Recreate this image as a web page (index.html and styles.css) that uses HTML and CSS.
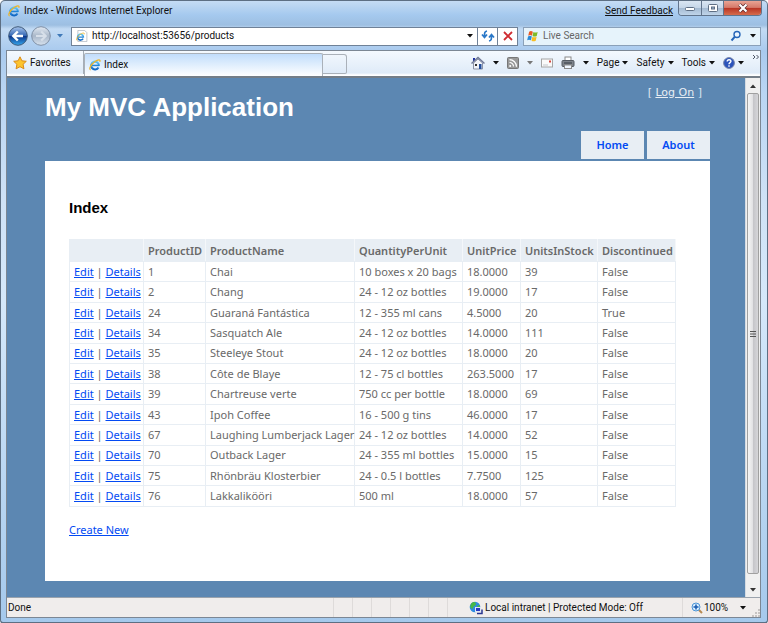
FILE: index.html
```html
<!DOCTYPE html>
<html lang="en">
<head>
<meta charset="utf-8">
<title>Index - Windows Internet Explorer</title>
<link rel="stylesheet" href="styles.css">
</head>
<body>
<svg class="defs" aria-hidden="true">
  <defs>
    <linearGradient id="ieBlue" x1="0" y1="0" x2="0" y2="1"><stop offset="0" stop-color="#5cc4f7"/><stop offset="1" stop-color="#1268c4"/></linearGradient>
    <linearGradient id="backBlue" x1="0" y1="0" x2="0" y2="1"><stop offset="0" stop-color="#a9c5ec"/><stop offset=".48" stop-color="#3467b4"/><stop offset=".5" stop-color="#0b3288"/><stop offset="1" stop-color="#36a8ee"/></linearGradient>
    <linearGradient id="fwdGrey" x1="0" y1="0" x2="0" y2="1"><stop offset="0" stop-color="#e3eaf3"/><stop offset=".5" stop-color="#a9b7c9"/><stop offset="1" stop-color="#d7e2ee"/></linearGradient>
    <symbol id="ie" viewBox="0 0 16 16">
      <path d="M13.2 9.2A5.2 5.2 0 1 0 12.6 11.2" fill="none" stroke="url(#ieBlue)" stroke-width="2.8"/>
      <path d="M4 8.6h9.6" stroke="#2183d6" stroke-width="2"/>
      <path d="M2.2 14.6C-.8 13.6 2.6 7.4 7.6 3.8 12.2.5 15.8.2 14.4 3.8" fill="none" stroke="#efb526" stroke-width="1.6"/>
    </symbol>
    <symbol id="down" viewBox="0 0 6 4"><path d="M0 0h6L3 3.5z" fill="currentColor"/></symbol>
  </defs>
</svg>
<div class="window">
  <header class="titlebar">
    <svg class="icon12"><use href="#ie"/></svg>
    <span class="title">Index - Windows Internet Explorer</span>
    <a class="feedback" href="#">Send Feedback</a>
    <div class="controls">
      <button class="ctl" aria-label="Minimize"><svg viewBox="0 0 12 10"><rect x="1.500" y="4.500" width="9" height="3" rx="1" fill="#fff" stroke="#5e6f85"/></svg></button>
      <button class="ctl" aria-label="Maximize"><svg viewBox="0 0 12 10"><rect x="1.500" y="1.500" width="9" height="7" rx="1" fill="#fff" stroke="#5e6f85"/><rect x="4.500" y="4" width="3" height="2" fill="#9fb6d0" stroke="#5e6f85"/></svg></button>
      <button class="ctl close" aria-label="Close"><svg viewBox="0 0 12 10"><path d="M2.500 1.500l7 7M9.500 1.500l-7 7" stroke="#5a2a2c" stroke-width="3.600"/><path d="M2.500 1.500l7 7M9.500 1.500l-7 7" stroke="#fff" stroke-width="2.200"/></svg></button>
    </div>
  </header>

  <div class="navrow">
    <div class="history">
      <button class="plain" aria-label="Back"><svg class="round" viewBox="0 0 20 20"><circle cx="10" cy="10" r="9.300" fill="url(#backBlue)" stroke="#3d5878"/><path d="M15 10H6M9.800 5.500L5.300 10l4.500 4.500" fill="none" stroke="#fff" stroke-width="2.400"/></svg></button>
      <button class="plain" aria-label="Forward"><svg class="round" viewBox="0 0 20 20"><circle cx="10" cy="10" r="9.300" fill="url(#fwdGrey)" stroke="#7f8fa5"/><path d="M5 10h9M10.200 5.500l4.500 4.500-4.500 4.500" fill="none" stroke="#d7dfe9" stroke-width="2.200"/></svg></button>
      <button class="plain recent" aria-label="Recent pages"><svg class="arrow"><use href="#down"/></svg></button>
    </div>
    <form class="address">
      <svg class="icon12" viewBox="0 0 16 16"><path d="M2.500.5h9l3 3v12h-12z" fill="#fff" stroke="#aab2bc"/><use href="#ie" x="0" y="3" width="12" height="12"/></svg>
      <input type="text" aria-label="Address" value="http://localhost:53656/products" autofocus>
      <button class="plain" type="button" aria-label="Show addresses"><svg class="arrow"><use href="#down"/></svg></button>
      <button class="cell" type="button" aria-label="Refresh"><svg viewBox="0 0 14 12"><path d="M6 1C3.500 1.500 3.500 3 3.500 6M1 4.500L3.500 7.500 6 4.500M8 11c2.500-.5 2.500-2 2.500-5M8 7.500L10.500 4.500 13 7.500" fill="none" stroke="#2a78c8" stroke-width="1.700"/></svg></button>
      <button class="cell" type="button" aria-label="Stop"><svg viewBox="0 0 14 12"><path d="M3 2l8 8M11 2l-8 8" stroke="#cf2b31" stroke-width="1.800"/></svg></button>
    </form>
    <form class="search">
      <svg class="icon12" viewBox="0 0 14 14"><path d="M2.500 2q2-1.500 4.300 0L5.800 6.600q-2-1.300-4.400 0z" fill="#ea5a24"/><path d="M7.500 2.300q2.200 1.400 4.900 0l-1 4.600q-2.700 1.400-4.900 0z" fill="#7fba28"/><path d="M1.200 7.500q2.300-1.300 4.400 0l-1 4.500q-2.300-1.300-4.400 0z" fill="#2b8ad8"/><path d="M6.300 7.900q2.200 1.400 4.900 0l-1 4.500q-2.700 1.400-4.900 0z" fill="#f8bd23"/></svg>
      <input type="text" aria-label="Search" placeholder="Live Search">
      <button class="plain" aria-label="Search"><svg class="icon12" viewBox="0 0 12 12"><circle cx="7" cy="4.500" r="3" fill="#eaf5ff" stroke="#2565b8" stroke-width="1.400"/><path d="M4.700 6.800L1.500 10.500" stroke="#2565b8" stroke-width="2"/></svg></button>
      <button class="plain" type="button" aria-label="Search options"><svg class="arrow"><use href="#down"/></svg></button>
    </form>
  </div>

  <div class="frame">
    <div class="tabrow">
      <button class="favorites"><svg class="icon14" viewBox="0 0 14 14"><path d="M7 .8l1.900 4 4.400.5-3.200 3 .8 4.500L7 10.700l-3.900 2.100.8-4.500-3.200-3 4.400-.5z" fill="#fcc42e" stroke="#dc8a16"/></svg>Favorites</button>
      <a class="tab" href="#"><svg class="icon12"><use href="#ie"/></svg>Index</a>
      <button class="newtab" aria-label="New tab"></button>
      <div class="commands">
        <button class="plain" aria-label="Home"><svg class="icon14" viewBox="0 0 14 14"><path d="M2 2h2v3H2z" fill="#1e2fa0"/><path d="M2.500 7v6h9V7L7 3z" fill="#f1f3f8" stroke="#8c94a8"/><path d="M.5 7.500L7 1.500l6.500 6" fill="none" stroke="#6f7896" stroke-width="1.500"/><rect x="4" y="8" width="2" height="2" fill="#333"/><rect x="8" y="8" width="2.500" height="5" fill="#244f9b"/></svg></button>
        <button class="plain" aria-label="Home options"><svg class="arrow"><use href="#down"/></svg></button>
        <button class="plain" aria-label="Feeds"><svg class="icon12" viewBox="0 0 12 12"><rect x=".5" y=".5" width="11" height="11" rx="1" fill="#999" stroke="#777"/><circle cx="3.200" cy="9" r="1" fill="#fff"/><path d="M2.500 5.500a4 4 0 0 1 4 4M2.500 2.700a7 7 0 0 1 7 7" fill="none" stroke="#fff" stroke-width="1.200"/></svg></button>
        <button class="plain dim" aria-label="Feed options"><svg class="arrow"><use href="#down"/></svg></button>
        <button class="plain" aria-label="Mail"><svg class="icon12" viewBox="0 0 12 12"><rect x=".5" y="2" width="11" height="8" fill="#fafafa" stroke="#a5a5a5"/><path d="M2 8h5" stroke="#c4c8ce"/><rect x="8" y="3.500" width="2" height="2" fill="#d8453b"/></svg></button>
        <button class="plain" aria-label="Print"><svg class="icon14" viewBox="0 0 14 14"><rect x="4" y="1" width="6" height="4" fill="#fff" stroke="#8a8a8a"/><rect x="1" y="4.500" width="12" height="6" rx="1" fill="#7d838b" stroke="#555b63"/><path d="M3 7h8" stroke="#343a42"/><rect x="3.500" y="9" width="7" height="3.500" fill="#eef6ff" stroke="#8a8a8a"/></svg></button>
        <button class="plain" aria-label="Print options"><svg class="arrow"><use href="#down"/></svg></button>
        <button class="menu">Page<svg class="arrow"><use href="#down"/></svg></button>
        <button class="menu">Safety<svg class="arrow"><use href="#down"/></svg></button>
        <button class="menu">Tools<svg class="arrow"><use href="#down"/></svg></button>
        <button class="menu help" aria-label="Help"><svg class="icon12" viewBox="0 0 12 12"><circle cx="6" cy="6" r="5.400" fill="#2b53bb" stroke="#7583a8"/><path d="M4.200 4.600C4.200 2 8 2.200 7.900 4.400 7.800 5.600 6 5.700 6 7.300M6 8.300v1.400" fill="none" stroke="#fff" stroke-width="1.400"/></svg><svg class="arrow"><use href="#down"/></svg></button>
        <button class="plain more" aria-label="More"><svg viewBox="0 0 8 6"><path d="M1 1l2 2-2 2M4.500 1l2 2-2 2" fill="none" stroke="#4e5564"/></svg></button>
      </div>
    </div>

    <div class="viewport">
      <div class="page">
        <div class="masthead">
          <h1>My MVC Application</h1>
          <p class="login">[ <a href="#">Log On</a> ]</p>
        </div>
        <nav class="tabs"><a href="#">Home</a><a href="#">About</a></nav>
        <main>
          <h2>Index</h2>
          <table>
            <colgroup><col class="c-link"><col class="c-id"><col class="c-name"><col class="c-qty"><col class="c-price"><col class="c-stock"><col class="c-disc"></colgroup>
            <thead><tr><th></th><th>ProductID</th><th>ProductName</th><th>QuantityPerUnit</th><th>UnitPrice</th><th>UnitsInStock</th><th>Discontinued</th></tr></thead>
            <tbody>
              <tr><td><a href="#">Edit</a> | <a href="#">Details</a></td><td>1</td><td>Chai</td><td>10 boxes x 20 bags</td><td>18.0000</td><td>39</td><td>False</td></tr>
              <tr><td><a href="#">Edit</a> | <a href="#">Details</a></td><td>2</td><td>Chang</td><td>24 - 12 oz bottles</td><td>19.0000</td><td>17</td><td>False</td></tr>
              <tr><td><a href="#">Edit</a> | <a href="#">Details</a></td><td>24</td><td>Guaraná Fantástica</td><td>12 - 355 ml cans</td><td>4.5000</td><td>20</td><td>True</td></tr>
              <tr><td><a href="#">Edit</a> | <a href="#">Details</a></td><td>34</td><td>Sasquatch Ale</td><td>24 - 12 oz bottles</td><td>14.0000</td><td>111</td><td>False</td></tr>
              <tr><td><a href="#">Edit</a> | <a href="#">Details</a></td><td>35</td><td>Steeleye Stout</td><td>24 - 12 oz bottles</td><td>18.0000</td><td>20</td><td>False</td></tr>
              <tr><td><a href="#">Edit</a> | <a href="#">Details</a></td><td>38</td><td>Côte de Blaye</td><td>12 - 75 cl bottles</td><td>263.5000</td><td>17</td><td>False</td></tr>
              <tr><td><a href="#">Edit</a> | <a href="#">Details</a></td><td>39</td><td>Chartreuse verte</td><td>750 cc per bottle</td><td>18.0000</td><td>69</td><td>False</td></tr>
              <tr><td><a href="#">Edit</a> | <a href="#">Details</a></td><td>43</td><td>Ipoh Coffee</td><td>16 - 500 g tins</td><td>46.0000</td><td>17</td><td>False</td></tr>
              <tr><td><a href="#">Edit</a> | <a href="#">Details</a></td><td>67</td><td>Laughing Lumberjack Lager</td><td>24 - 12 oz bottles</td><td>14.0000</td><td>52</td><td>False</td></tr>
              <tr><td><a href="#">Edit</a> | <a href="#">Details</a></td><td>70</td><td>Outback Lager</td><td>24 - 355 ml bottles</td><td>15.0000</td><td>15</td><td>False</td></tr>
              <tr><td><a href="#">Edit</a> | <a href="#">Details</a></td><td>75</td><td>Rhönbräu Klosterbier</td><td>24 - 0.5 l bottles</td><td>7.7500</td><td>125</td><td>False</td></tr>
              <tr><td><a href="#">Edit</a> | <a href="#">Details</a></td><td>76</td><td>Lakkalikööri</td><td>500 ml</td><td>18.0000</td><td>57</td><td>False</td></tr>
            </tbody>
          </table>
          <p class="create"><a href="#">Create New</a></p>
        </main>
      </div>
      <div class="scroll">
        <button aria-label="Scroll up"><svg viewBox="0 0 6 4"><path d="M0 4h6L3 .5z" fill="#333"/></svg></button>
        <div class="thumb"><svg viewBox="0 0 6 8"><path d="M0 1.500h6M0 4h6M0 6.500h6" stroke="#555"/></svg></div>
        <button aria-label="Scroll down"><svg viewBox="0 0 6 4"><path d="M0 0h6L3 3.500z" fill="#333"/></svg></button>
      </div>
    </div>

    <footer class="status">
      <span class="done">Done</span>
      <span class="slots"><i></i><i></i><i></i><i></i><i></i><i></i><i></i></span>
      <span class="zone"><svg class="icon14" viewBox="0 0 14 14"><circle cx="6" cy="6" r="5.300" fill="#2f8be0"/><path d="M2 3c2-3 5-2 5 0S4 5 4 7 2 7 1 6zM8 5l3-1v4L9 9z" fill="#48b848"/><rect x="6.500" y="6.500" width="5" height="4" fill="#2838c0" stroke="#dfe6f5"/><path d="M8 12.500h5v-4" fill="none" stroke="#27358f" stroke-width="1.500"/></svg>Local intranet | Protected Mode: Off</span>
      <button class="zoom"><svg class="icon12" viewBox="0 0 12 12"><path d="M7.500 7.500L11 11" stroke="#b68a52" stroke-width="2"/><circle cx="5" cy="5" r="4" fill="#d9eefe" stroke="#4b94d6"/><path d="M5 2.500v5M2.500 5h5" stroke="#1659b0" stroke-width="1.500"/></svg>100%<svg class="arrow"><use href="#down"/></svg></button>
      <svg class="grip" viewBox="0 0 8 8"><path d="M6 0h2v2H6zM3 3h2v2H3zM6 3h2v2H6zM0 6h2v2H0zM3 6h2v2H3zM6 6h2v2H6z" fill="#c6c3c2"/></svg>
    </footer>
  </div>
</div>
</body>
</html>
```
FILE: styles.css
```css
* { box-sizing: border-box; }
body { margin: 0; font: 10px/14px Roboto, sans-serif; color: #111; }
button, input { font: inherit; color: inherit; margin: 0; padding: 0; border: 0; background: none; }
input:focus { outline: 0; }
svg { display: block; flex: none; }
.defs { position: absolute; width: 0; height: 0; }
.icon12 { width: 12px; height: 12px; }
.icon14 { width: 14px; height: 14px; }
.arrow { width: 6px; height: 4px; }

.window {
  display: flex; flex-direction: column; min-height: 100vh;
  padding: 0 6px 4px 5px;
  border: 1px solid #5d6f83; border-bottom-width: 2px; border-radius: 5px 5px 4px 4px;
  background: linear-gradient(#c5dcf4, #a5c9ee 14px, #9dbfe2 24px, #c3dbf4 28px, #a9caee 50px, #b9d5f3 90px, #cfe2f6 200px, #d5e8fa 300px, #a5c9ec);
}

.titlebar { display: flex; height: 25px; padding-left: 2px; }
.titlebar > .icon12 { margin-top: 4px; }
.title { flex: 1; margin: 3px 0 0 4px; }
.feedback { margin: 3px 5px 0 0; color: #111; }
.controls { display: flex; height: 15px; margin-right: -1px; border: 1px solid #61748c; border-top: 0; border-radius: 0 0 4px 4px; overflow: hidden; }
.ctl { display: grid; place-items: center; width: 22px; background: linear-gradient(#dae6f3, #c6d7e9 48%, #a5bbd3 52%, #bfd4e9); }
.ctl + .ctl { border-left: 1px solid #61748c; }
.ctl svg { width: 12px; height: 10px; }
.ctl.close { width: 38px; background: linear-gradient(#e9a393, #d67a6a 46%, #b93524 52%, #d56c4d); }

.navrow { display: flex; align-items: center; height: 20px; margin-bottom: 4px; }
.plain { display: flex; align-items: center; }
.history { display: flex; align-items: center; width: 65px; padding-left: 2px; gap: 3px; }
.round { width: 20px; height: 20px; }
.recent { margin-left: 3px; color: #3f79b8; }
.address { display: flex; flex: 1; align-items: center; height: 19px; padding-left: 4px; background: #fff; border: 1px solid #6f8197; }
.address input { flex: 1; min-width: 0; margin-left: 4px; }
.address .plain { margin-right: 4px; }
.cell { display: grid; place-items: center; align-self: stretch; width: 20px; border-left: 1px solid #6f8197; }
.cell svg { width: 14px; height: 12px; }
.search { display: flex; align-items: center; width: 238px; height: 19px; margin-left: 5px; padding: 0 4px 0 3px; gap: 4px; background: #e6f3fb; border: 1px solid #8aa0b8; }
.search input { flex: 1; min-width: 0; }
.search input::placeholder { color: #666; opacity: 1; }
.search .arrow { margin-left: 4px; }

.frame { display: flex; flex: 1; flex-direction: column; border: 1px solid #7c8794; background: #e4effa; }
.tabrow { display: flex; height: 27px; border-bottom: 2px solid #747e88; background: linear-gradient(#f4f9fe, #dfebf8 22px, #fff 24px); }
.favorites { display: flex; align-items: center; width: 77px; height: 23px; padding-left: 6px; gap: 3px; border-right: 1px solid #a5adb6; }
.tab { display: flex; align-items: center; width: 239px; height: 23px; margin-top: 2px; padding-left: 4px; gap: 3px; color: inherit; text-decoration: none; background: linear-gradient(#c1ddfb, #fff); border: 1px solid #aab1b9; border-bottom: 0; border-radius: 2px 2px 0 0; }
.newtab { width: 24px; height: 20px; margin-top: 3px; border: 1px solid #aab1b9; border-left: 0; border-radius: 0 3px 2px 0; }
.commands { display: flex; align-items: center; flex: 1; justify-content: flex-end; height: 23px; gap: 8px; }
.menu { display: flex; align-items: center; gap: 3px; }
.dim { color: #777; }
.more { align-self: flex-start; margin-top: 3px; }
.more svg { width: 8px; height: 6px; }

.viewport { display: flex; flex: 1; }
.page { flex: 1; padding: 0 35px 16px 38px; background: #5c87b2; font: 11px/14px "Noto Sans", sans-serif; color: #696969; }
.masthead { display: flex; justify-content: space-between; height: 53px; }
h1 { margin: 13px 0 0; font: bold 26px/32px "Liberation Sans", sans-serif; color: #fff; }
.login { margin: 8px 8px 0 0; font-family: "DejaVu Sans", sans-serif; color: #dfe8f1; }
.login a { color: #e8eef4; }
.tabs { display: flex; justify-content: flex-end; gap: 3px; padding-bottom: 2px; }
.tabs a { width: 63px; padding: 7px 0; text-align: center; font-weight: 600; color: #034af3; background: #e8eef4; text-decoration: none; }
main { padding: 36px 24px 44px; background: #fff; }
main a { color: #034af3; }
h2 { margin: 0 0 20px; font: bold 15px/22px "Liberation Sans", sans-serif; color: #000; }
table { width: 606px; height: 268px; table-layout: fixed; border-collapse: collapse; border: 1px solid #e8eef4; }
th, td { padding: 0 4px; border: 1px solid #e8eef4; text-align: left; white-space: nowrap; }
th { height: 22px; font-weight: 600; background: #e8eef4; border-right-color: #f4f7fa; }
.c-link { width: 74px; } .c-id { width: 62px; } .c-name { width: 149px; } .c-qty { width: 108px; }
.c-price { width: 58px; } .c-stock { width: 77px; } .c-disc { width: 78px; }
.create { margin: 16px 0 0; }
.scroll { display: flex; flex-direction: column; width: 15px; background: #f0f0f0; border-left: 1px solid #d5dbe2; }
.scroll button { display: grid; place-items: center; height: 15px; }
.scroll button svg { width: 6px; height: 4px; }
.thumb { display: grid; flex: 1; place-items: center; margin: 0 1px 8px; border: 1px solid #a0a0a0; border-radius: 2px; background: linear-gradient(90deg, #f5f5f5, #e2e2e4 45%, #c6c6ca 55%, #d6d6d9); }
.thumb svg { width: 6px; height: 8px; }

.status { display: flex; align-items: center; height: 20px; background: #f0edec; border-top: 1px solid #9aa3ad; }
.done { flex: 1; padding-left: 1px; }
.slots { display: flex; align-self: stretch; }
.slots i { width: 19px; border-left: 1px solid #dedbda; }
.zone { display: flex; align-items: center; gap: 2px; width: 216px; padding-left: 3px; }
.zoom { display: flex; align-self: stretch; align-items: center; gap: 1px; width: 66px; padding-left: 8px; border-left: 1px solid #dedbda; }
.zoom .arrow { margin-left: 11px; }
.grip { align-self: flex-end; width: 8px; height: 8px; margin-left: 4px; }
```
